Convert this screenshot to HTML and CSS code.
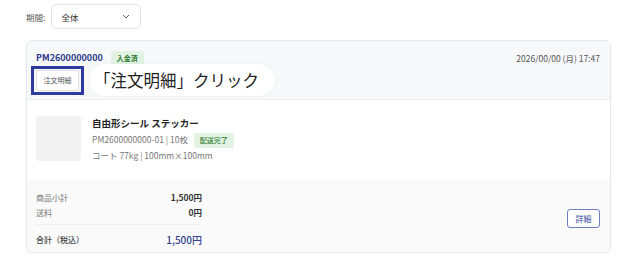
FILE: index.html
```html
<!DOCTYPE html>
<html lang="ja">
<head>
    <meta charset="UTF-8">
    <meta name="viewport" content="width=device-width, initial-scale=1.0">
    <title>注文履歴</title>
    <link rel="stylesheet" href="styles.css">
</head>
<body>
    <div class="filter">
        <span class="filter-label">期間:</span>
        <div class="select">
            <span>全体</span>
            <svg class="chevron" width="8" height="5" viewBox="0 0 8 5"><path d="M1 1l3 3 3-3" fill="none" stroke="#666" stroke-width="1"/></svg>
        </div>
    </div>

    <div class="card">
        <div class="card-head">
            <div class="head-row">
                <div class="order-no">
                    <span class="order-id">PM2600000000</span>
                    <span class="badge">入金済</span>
                </div>
                <span class="order-date">2026/00/00 (月) 17:47</span>
            </div>
            <div class="head-actions">
                <span class="highlight"><button class="btn-detail-order">注文明細</button></span>
                <span class="callout">「注文明細」クリック</span>
            </div>
        </div>

        <div class="item">
            <div class="thumb"></div>
            <div class="item-info">
                <div class="item-title">自由形シール ステッカー</div>
                <div class="item-line">PM2600000000-01 | 10枚 <span class="badge">配送完了</span></div>
                <div class="item-line">コート 77kg | 100mm×100mm</div>
            </div>
        </div>

        <div class="card-foot">
            <div class="summary">
                <div class="sum-row"><span>商品小計</span><strong>1,500円</strong></div>
                <div class="sum-row"><span>送料</span><strong>0円</strong></div>
                <div class="sum-row total"><span>合計（税込）</span><strong>1,500円</strong></div>
            </div>
            <button class="btn-more">詳細</button>
        </div>
    </div>
</body>
</html>
```

FILE: styles.css
```css
body {
    margin: 0;
    background: #fff;
    font-family: "Noto Sans CJK JP", "Noto Sans", sans-serif;
    color: #333;
}
.filter {
    display: flex;
    align-items: center;
    gap: 6px;
    padding: 4px 26px 0;
}
.filter-label {
    font-size: 8.5px;
    color: #555;
}
.select {
    display: flex;
    align-items: center;
    justify-content: space-between;
    padding: 0 10px 0 9px;
    box-sizing: border-box;
    width: 90px;
    height: 25px;
    border: 1px solid #e2e4e8;
    border-radius: 5px;
    font-size: 8.5px;
    color: #333;
}
.card {
    margin: 11px 26px 0;
    width: 583px;
    border: 1px solid #e6e8eb;
    border-radius: 6px;
    overflow: hidden;
    box-shadow: 0 1px 2px rgba(0,0,0,0.06);
}
.card-head {
    background: #f7f8fa;
    padding: 8px 9px 3px 9px;
    border-bottom: 1px solid #eceef1;
}
.head-row {
    display: flex;
    justify-content: space-between;
    align-items: center;
    height: 17px;
}
.order-no {
    display: flex;
    align-items: center;
    gap: 8px;
}
.order-id {
    font-size: 9px;
    font-weight: 700;
    color: #2d3a8c;
}
.badge {
    display: inline-block;
    background: #e3f3e3;
    color: #2e7d32;
    font-size: 7px;
    font-weight: 700;
    line-height: 14px;
    padding: 0 6px;
    border-radius: 2px;
}
.order-date {
    font-size: 8.5px;
    color: #555;
    margin-right: 1px;
}
.head-actions {
    display: flex;
    align-items: center;
    gap: 5px;
    margin-top: -2px;
    margin-left: -5px;
    height: 32px;
}
.highlight {
    display: inline-flex;
    border: 3px solid #2e3a9e;
    padding: 1px 2px;
}
.btn-detail-order {
    font-family: inherit;
    font-size: 7px;
    color: #555;
    background: #fff;
    border: 1px solid #dcdfe3;
    border-radius: 2px;
    width: 43px;
    height: 21px;
    padding: 0;
}
.callout {
    background: #fff;
    border-radius: 16px;
    height: 32px;
    line-height: 32px;
    padding: 0 16px 0 5px;
    font-size: 16.5px;
    font-weight: 400;
    color: #222;
    box-shadow: 0 0 2px rgba(0,0,0,0.08);
}
.item {
    display: flex;
    padding: 16px 9px 17px;
    background: #fff;
}
.thumb {
    width: 45px;
    height: 45px;
    background: #f2f2f2;
    border-radius: 3px;
}
.item-info {
    margin-left: 11px;
}
.item-title {
    font-size: 9.5px;
    font-weight: 700;
    color: #222;
    line-height: 15px;
    margin-bottom: 1px;
}
.item-line {
    font-size: 8.5px;
    color: #777;
    line-height: 15px;
}
.item-line .badge {
    margin-left: 4px;
    font-weight: 500;
    line-height: 15px;
}
.card-foot {
    background: #fafafa;
    display: flex;
    align-items: center;
    justify-content: space-between;
    padding: 10px 9px 5px;
}
.summary {
    width: 166px;
}
.sum-row {
    display: flex;
    justify-content: space-between;
    align-items: center;
    font-size: 8px;
    line-height: 15px;
    color: #777;
}
.sum-row strong {
    font-size: 8.5px;
    color: #333;
}
.sum-row.total {
    border-top: 1px solid #eceef1;
    margin-top: 4px;
    padding-top: 7px;
    color: #444;
    font-weight: 500;
}
.sum-row.total strong {
    font-size: 10px;
    color: #33418f;
    font-weight: 500;
}
.btn-more {
    font-family: inherit;
    font-size: 8px;
    color: #3c4a9c;
    background: #fff;
    border: 1px solid #6f7fc4;
    border-radius: 3px;
    width: 33px;
    height: 19px;
    padding: 0;
    margin-right: 1px;
}
```
